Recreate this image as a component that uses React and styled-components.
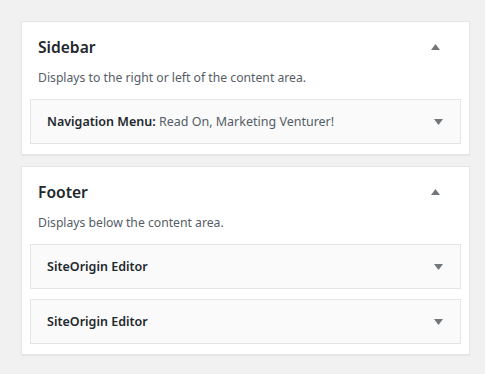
import React from 'react';
import styled, { createGlobalStyle } from 'styled-components';

const GlobalStyle = createGlobalStyle`
  body {
    margin: 0;
    background: #f1f1f1;
    font-family: 'Noto Sans', 'Open Sans', sans-serif;
    color: #23282d;
  }
`;

const Page = styled.div`
  display: flex;
  flex-direction: column;
  gap: 11px;
  padding: 21px 15px 20px 21px;
  width: 485px;
  box-sizing: border-box;
`;

const Area = styled.div`
  background: #fff;
  border: 1px solid #e5e5e5;
  box-shadow: 0 1px 1px rgba(0, 0, 0, 0.04);
  padding: 0 8px 10px 8px;
`;

const AreaHead = styled.div`
  display: flex;
  align-items: center;
  justify-content: space-between;
  padding: 0 21px 0 8px;
  height: 50px;
`;

const AreaTitle = styled.h2`
  margin: 0;
  font-size: 15.6px;
  font-weight: 600;
  color: #23282d;
`;

const Description = styled.p`
  margin: -3px 0 0 8px;
  font-size: 12.2px;
  color: #555d66;
  line-height: 18px;
  height: 30px;
`;

const Widgets = styled.div`
  display: flex;
  flex-direction: column;
  gap: 10px;
`;

const Widget = styled.div`
  display: flex;
  align-items: center;
  justify-content: space-between;
  height: 43px;
  padding: 0 17px 0 16px;
  background: #fafafa;
  border: 1px solid #e5e5e5;
`;

const WidgetTitle = styled.span`
  font-size: 12.5px;
  font-weight: 600;
  color: #23282d;
`;

const WidgetSub = styled.span`
  font-weight: 400;
  color: #555d66;
`;

const Arrow = ({ up }) => (
  <svg width="9" height="6" viewBox="0 0 9 6">
    <path d={up ? 'M0 6 L4.5 0 L9 6 Z' : 'M0 0 L4.5 6 L9 0 Z'} fill="#72777c" />
  </svg>
);

const areas = [
  {
    title: 'Sidebar',
    description: 'Displays to the right or left of the content area.',
    widgets: [{ name: 'Navigation Menu', sub: 'Read On, Marketing Venturer!' }],
  },
  {
    title: 'Footer',
    description: 'Displays below the content area.',
    widgets: [{ name: 'SiteOrigin Editor' }, { name: 'SiteOrigin Editor' }],
  },
];

export default function App() {
  return (
    <>
      <GlobalStyle />
      <Page>
        {areas.map((area) => (
          <Area key={area.title}>
            <AreaHead>
              <AreaTitle>{area.title}</AreaTitle>
              <Arrow up />
            </AreaHead>
            <Description>{area.description}</Description>
            <Widgets>
              {area.widgets.map((w, i) => (
                <Widget key={i}>
                  <WidgetTitle>
                    {w.name}
                    {w.sub && <>: <WidgetSub>{w.sub}</WidgetSub></>}
                  </WidgetTitle>
                  <Arrow />
                </Widget>
              ))}
            </Widgets>
          </Area>
        ))}
      </Page>
    </>
  );
}
